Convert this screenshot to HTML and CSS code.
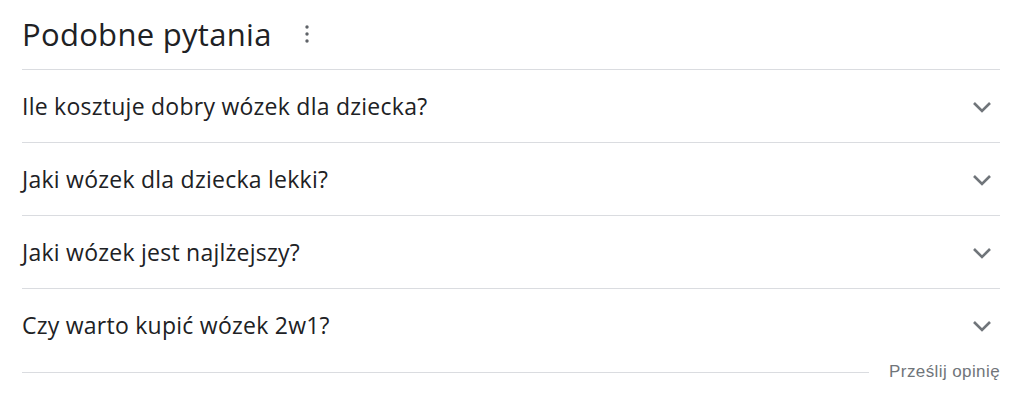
FILE: index.html
```html
<!DOCTYPE html>
<html lang="pl">
<head>
<meta charset="utf-8">
<link rel="stylesheet" href="styles.css">
</head>
<body>
<div class="paa">
  <div class="paa-header">
    <h2 class="paa-title">Podobne pytania</h2>
    <span class="paa-more" aria-label="Więcej opcji">
      <svg width="4" height="18" viewBox="0 0 4 18"><circle cx="2" cy="2" r="1.7"/><circle cx="2" cy="9" r="1.7"/><circle cx="2" cy="16" r="1.7"/></svg>
    </span>
  </div>
  <div class="paa-row"><span class="paa-q">Ile kosztuje dobry wózek dla dziecka?</span><svg class="chev" width="20" height="12" viewBox="0 0 20 12"><path d="M2 2 L10 10 L18 2"/></svg></div>
  <div class="paa-row"><span class="paa-q">Jaki wózek dla dziecka lekki?</span><svg class="chev" width="20" height="12" viewBox="0 0 20 12"><path d="M2 2 L10 10 L18 2"/></svg></div>
  <div class="paa-row"><span class="paa-q">Jaki wózek jest najlżejszy?</span><svg class="chev" width="20" height="12" viewBox="0 0 20 12"><path d="M2 2 L10 10 L18 2"/></svg></div>
  <div class="paa-row last"><span class="paa-q">Czy warto kupić wózek 2w1?</span><svg class="chev" width="20" height="12" viewBox="0 0 20 12"><path d="M2 2 L10 10 L18 2"/></svg></div>
  <div class="paa-footer">
    <div class="paa-line"></div>
    <span class="paa-feedback">Prześlij opinię</span>
  </div>
</div>
</body>
</html>
```
FILE: styles.css
```css
body {
  margin: 0;
  background: #fff;
  font-family: "Open Sans", Roboto, sans-serif;
  color: #202124;
}
.paa {
  width: 978px;
  margin-left: 22px;
}
.paa-header {
  display: flex;
  align-items: center;
  height: 69px;
  border-bottom: 1px solid #dadce0;
}
.paa-title {
  margin: 0;
  font-weight: 400;
  font-size: 31px;
  letter-spacing: 0.3px;
  line-height: 36px;
  padding-bottom: 1px;
}
.paa-more {
  display: flex;
  margin-left: 33px;
  margin-top: -1px;
}
.paa-more svg { fill: #5f6368; }
.paa-row {
  display: flex;
  align-items: center;
  justify-content: space-between;
  height: 72px;
  border-bottom: 1px solid #dadce0;
}
.paa-row.last {
  border-bottom: none;
}
.paa-q {
  font-size: 23px;
  letter-spacing: 0.25px;
  line-height: 28px;
}
.chev {
  margin-right: 8px;
  margin-top: 2px;
  fill: none;
  stroke: #70757a;
  stroke-width: 2.6;
}
.paa-footer {
  display: flex;
  align-items: center;
  height: 22px;
}
.paa-line {
  flex: 1;
  height: 1px;
  background: #dadce0;
  margin-right: 20px;
}
.paa-feedback {
  font-family: "Liberation Sans", Arial, sans-serif;
  font-size: 17px;
  letter-spacing: 0.4px;
  color: #70757a;
  margin-top: -1px;
}
```
